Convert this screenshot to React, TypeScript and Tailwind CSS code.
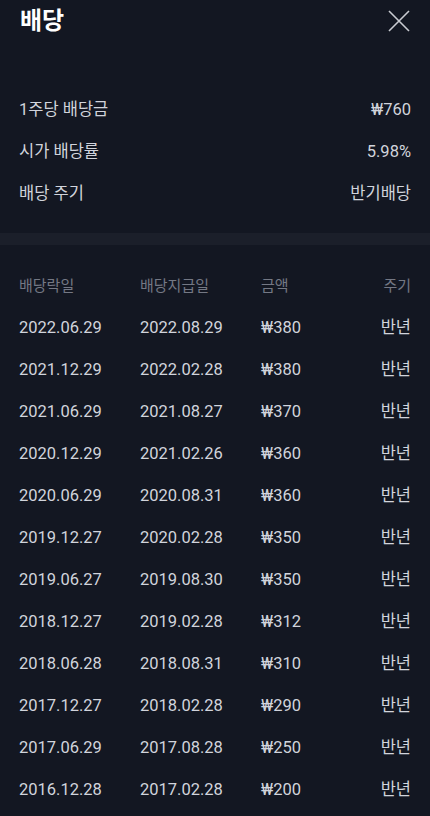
import React from 'react'

const summary = [
  { label: '1주당 배당금', value: '₩760' },
  { label: '시가 배당률', value: '5.98%' },
  { label: '배당 주기', value: '반기배당' },
]

const history = [
  ['2022.06.29', '2022.08.29', '₩380'],
  ['2021.12.29', '2022.02.28', '₩380'],
  ['2021.06.29', '2021.08.27', '₩370'],
  ['2020.12.29', '2021.02.26', '₩360'],
  ['2020.06.29', '2020.08.31', '₩360'],
  ['2019.12.27', '2020.02.28', '₩350'],
  ['2019.06.27', '2019.08.30', '₩350'],
  ['2018.12.27', '2019.02.28', '₩312'],
  ['2018.06.28', '2018.08.31', '₩310'],
  ['2017.12.27', '2018.02.28', '₩290'],
  ['2017.06.29', '2017.08.28', '₩250'],
  ['2016.12.28', '2017.02.28', '₩200'],
]

export default function App() {
  return (
    <div
      className="min-h-[816px] w-[430px] overflow-hidden bg-[#131722] text-[#d1d4dc]"
      style={{ fontFamily: 'Roboto, "Noto Sans CJK KR", sans-serif' }}
    >
      <div className="flex h-[42px] items-center justify-between pl-[20px] pr-[18px]">
        <h1 className="text-[24px] font-bold leading-none text-white">배당</h1>
        <svg width="26" height="26" viewBox="0 0 26 26" fill="none" stroke="#c9cbd1" strokeWidth="1.6">
          <path d="M3 3 L23 23 M23 3 L3 23" />
        </svg>
      </div>

      <div className="flex flex-col pt-[47px] pb-[18px]">
        {summary.map((s) => (
          <div key={s.label} className="flex h-[42px] items-center justify-between px-[19px] text-[16.5px]">
            <span>{s.label}</span>
            <span>{s.value}</span>
          </div>
        ))}
      </div>

      <div className="h-[12px] bg-[#1b1f2a]" />

      <div className="pt-[20px]">
        <div className="grid h-[42px] grid-cols-[121px_121px_1fr_auto] items-center px-[19px] text-[15px] text-[#747884]">
          <span>배당락일</span>
          <span>배당지급일</span>
          <span>금액</span>
          <span>주기</span>
        </div>
        {history.map((r) => (
          <div key={r[0]} className="grid h-[42px] grid-cols-[121px_121px_1fr_auto] items-center px-[19px] text-[16.5px]">
            <span>{r[0]}</span>
            <span>{r[1]}</span>
            <span>{r[2]}</span>
            <span>반년</span>
          </div>
        ))}
      </div>
    </div>
  )
}
